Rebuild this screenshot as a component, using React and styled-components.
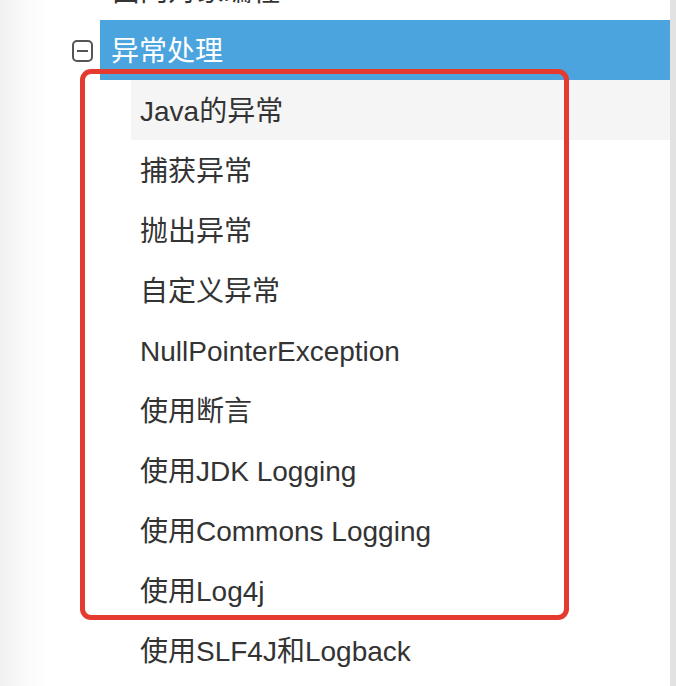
import styled, { createGlobalStyle } from 'styled-components';

const GlobalStyle = createGlobalStyle`
    html, body {
        margin: 0;
        padding: 0;
        background: #fff;
    }
    body {
        font-family: "Liberation Sans", "Noto Sans CJK SC", sans-serif;
        color: #333;
    }
`;

const Page = styled.div`
    position: relative;
    display: flex;
    width: 676px;
    height: 686px;
    overflow: hidden;
`;

const Main = styled.div`
    flex: 1;
    background: linear-gradient(to right, #f1f1f1 0px, #fafafa 25px, #fff 48px);
    overflow: hidden;
`;

const ScrollEdge = styled.div`
    width: 6px;
    background: #e2e2e2;
`;

const Tree = styled.ul`
    list-style: none;
    margin: -40px 0 0;
    padding: 0;
`;

const Row = styled.li`
    display: flex;
    height: 60px;
`;

const Indent = styled.div`
    flex: none;
    width: ${p => p.$width}px;
    display: flex;
    align-items: center;
    justify-content: flex-end;
    padding-right: 7px;
    box-sizing: border-box;
`;

const Label = styled.div`
    flex: 1;
    display: flex;
    align-items: center;
    padding-left: ${p => p.$pad}px;
    padding-top: 4px;
    font-size: 28px;
    line-height: 1;
    white-space: nowrap;
    color: ${p => (p.$active ? '#fff' : '#333')};
    background: ${p => (p.$active ? '#4ca4de' : p.$hover ? '#f5f5f5' : 'transparent')};
`;

const Toggle = styled.span`
    width: 21px;
    height: 22px;
    box-sizing: border-box;
    border: 2px solid #555;
    border-radius: 5px;
    display: flex;
    align-items: center;
    justify-content: center;
    margin-top: 2px;

    &::after {
        content: '';
        width: 11px;
        height: 2px;
        background: #555;
    }
`;

const Highlight = styled.div`
    position: absolute;
    left: 80px;
    top: 69px;
    width: 489px;
    height: 551px;
    box-sizing: border-box;
    border: 5px solid #e43a2f;
    border-radius: 11px;
    pointer-events: none;
`;

const children = [
    'Java的异常',
    '捕获异常',
    '抛出异常',
    '自定义异常',
    'NullPointerException',
    '使用断言',
    '使用JDK Logging',
    '使用Commons Logging',
    '使用Log4j',
    '使用SLF4J和Logback',
];

export default function App() {
    return (
        <>
            <GlobalStyle />
            <Page>
                <Main>
                    <Tree>
                        <Row>
                            <Indent $width={100} />
                            <Label $pad={12}>面向对象编程</Label>
                        </Row>
                        <Row>
                            <Indent $width={100}><Toggle /></Indent>
                            <Label $pad={11} $active>异常处理</Label>
                        </Row>
                        {children.map((c, i) => (
                            <Row key={c}>
                                <Indent $width={131} />
                                <Label $pad={9} $hover={i === 0}>{c}</Label>
                            </Row>
                        ))}
                    </Tree>
                </Main>
                <ScrollEdge />
                <Highlight />
            </Page>
        </>
    );
}
